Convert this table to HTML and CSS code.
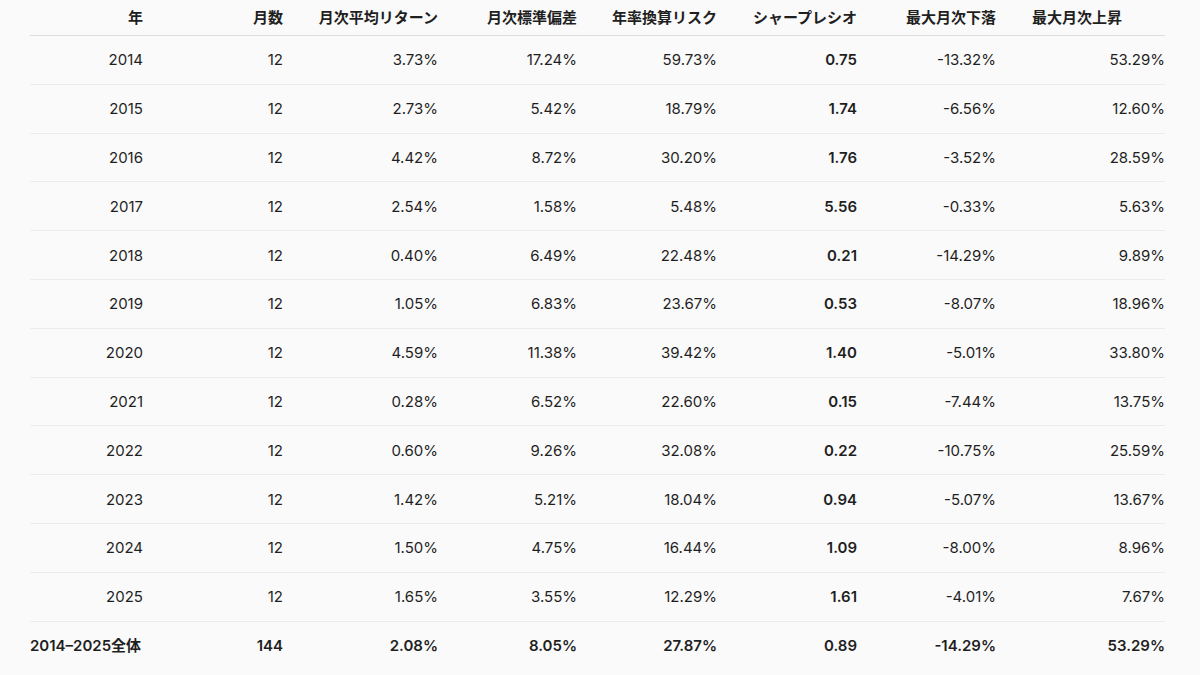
FILE: index.html
```html
<!DOCTYPE html>
<html lang="ja">
<head>
<meta charset="utf-8">
<link rel="stylesheet" href="styles.css">
</head>
<body>
<table class="stats">
<colgroup>
<col class="c0"><col class="c1"><col class="c2"><col class="c3"><col class="c4"><col class="c5"><col class="c6"><col class="c7">
</colgroup>
<thead>
<tr><th>年</th><th>月数</th><th>月次平均リターン</th><th>月次標準偏差</th><th>年率換算リスク</th><th>シャープレシオ</th><th>最大月次下落</th><th><span class="inset">最大月次上昇</span></th></tr>
</thead>
<tbody>
<tr><td>2014</td><td>12</td><td>3.73%</td><td>17.24%</td><td>59.73%</td><td class="b">0.75</td><td>-13.32%</td><td>53.29%</td></tr>
<tr><td>2015</td><td>12</td><td>2.73%</td><td>5.42%</td><td>18.79%</td><td class="b">1.74</td><td>-6.56%</td><td>12.60%</td></tr>
<tr><td>2016</td><td>12</td><td>4.42%</td><td>8.72%</td><td>30.20%</td><td class="b">1.76</td><td>-3.52%</td><td>28.59%</td></tr>
<tr><td>2017</td><td>12</td><td>2.54%</td><td>1.58%</td><td>5.48%</td><td class="b">5.56</td><td>-0.33%</td><td>5.63%</td></tr>
<tr><td>2018</td><td>12</td><td>0.40%</td><td>6.49%</td><td>22.48%</td><td class="b">0.21</td><td>-14.29%</td><td>9.89%</td></tr>
<tr><td>2019</td><td>12</td><td>1.05%</td><td>6.83%</td><td>23.67%</td><td class="b">0.53</td><td>-8.07%</td><td>18.96%</td></tr>
<tr><td>2020</td><td>12</td><td>4.59%</td><td>11.38%</td><td>39.42%</td><td class="b">1.40</td><td>-5.01%</td><td>33.80%</td></tr>
<tr><td>2021</td><td>12</td><td>0.28%</td><td>6.52%</td><td>22.60%</td><td class="b">0.15</td><td>-7.44%</td><td>13.75%</td></tr>
<tr><td>2022</td><td>12</td><td>0.60%</td><td>9.26%</td><td>32.08%</td><td class="b">0.22</td><td>-10.75%</td><td>25.59%</td></tr>
<tr><td>2023</td><td>12</td><td>1.42%</td><td>5.21%</td><td>18.04%</td><td class="b">0.94</td><td>-5.07%</td><td>13.67%</td></tr>
<tr><td>2024</td><td>12</td><td>1.50%</td><td>4.75%</td><td>16.44%</td><td class="b">1.09</td><td>-8.00%</td><td>8.96%</td></tr>
<tr><td>2025</td><td>12</td><td>1.65%</td><td>3.55%</td><td>12.29%</td><td class="b">1.61</td><td>-4.01%</td><td>7.67%</td></tr>
<tr class="total"><td class="label">2014–2025全体</td><td>144</td><td>2.08%</td><td>8.05%</td><td>27.87%</td><td>0.89</td><td>-14.29%</td><td>53.29%</td></tr>
</tbody>
</table>
</body>
</html>
```
FILE: styles.css
```css
html, body {
  margin: 0;
  padding: 0;
  background: #fafafa;
}
body {
  padding: 0 35px 0 30px;
  font-family: Inter, "Noto Sans CJK JP", sans-serif;
  font-size: 15px;
  color: #1f1f1f;
}
.stats {
  width: 1135px;
  border-collapse: collapse;
  table-layout: fixed;
}
.c0 { width: 113px; }
.c1 { width: 140px; }
.c2 { width: 155px; }
.c3 { width: 139px; }
.c4 { width: 140px; }
.c5 { width: 140px; }
.c6 { width: 139px; }
.c7 { width: 169px; }
.stats th {
  height: 34px;
  padding: 0 0 1px 0;
  text-align: right;
  font-weight: 600;
  vertical-align: middle;
  border-bottom: 1.5px solid #dedede;
  line-height: 1;
}
.stats th .inset {
  display: inline-block;
  margin-right: 43px;
}
.stats td {
  height: 47.8px;
  padding: 0;
  text-align: right;
  vertical-align: middle;
  border-bottom: 1px solid #ececec;
  line-height: 1;
  font-weight: 400;
}
.stats td.b {
  font-weight: 600;
}
.stats tr.total td {
  font-weight: 600;
  border-bottom: none;
}
.stats tr.total td.label {
  text-align: left;
  white-space: nowrap;
}
```
